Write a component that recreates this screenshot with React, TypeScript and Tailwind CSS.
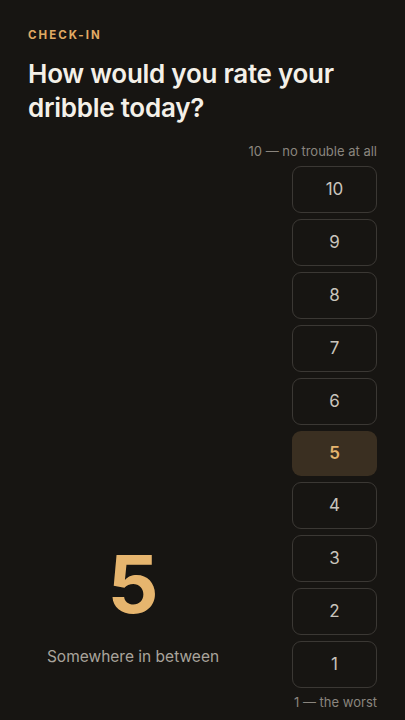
const scale = [10, 9, 8, 7, 6, 5, 4, 3, 2, 1];

export default function App() {
  const selected = 5;

  return (
    <div
      className="w-[405px] h-[720px] bg-[#171512] text-[#f4f0e8] overflow-hidden flex flex-col px-[28px]"
      style={{ fontFamily: "Inter, 'Noto Sans', sans-serif" }}
    >
      <div className="pt-[27px] text-[11.5px] font-bold tracking-[0.18em] text-[#e0aa63]">
        CHECK-IN
      </div>
      <h1 className="mt-[13px] text-[26px] leading-[34px] font-semibold tracking-[-0.01em]">
        How would you rate your
        <br />
        dribble today?
      </h1>

      <div className="flex flex-1 mt-[16px]">
        {/* current value */}
        <div className="w-[210px] flex flex-col items-center justify-end pb-[52px]">
          <div className="text-[80px] leading-none font-bold text-[#e6b56e]">
            {selected}
          </div>
          <div className="mt-[21px] text-[15.5px] text-[#a9a49c]">
            Somewhere in between
          </div>
        </div>

        <div className="flex-1 flex flex-col items-end">
          <div className="text-[13px] leading-[18px] text-[#8a857e] mt-[1px]">
            10 — no trouble at all
          </div>
          <div className="w-[85px] h-[522px] mt-[6px] flex flex-col gap-[6px]">
            {scale.map((n) => (
              <button
                key={n}
                className={
                  n === selected
                    ? "flex-1 rounded-[9px] bg-[#3a2f21] text-[#e6b56e] font-semibold text-[17px]"
                    : "flex-1 rounded-[9px] border border-[#3b3834] text-[#c9c4bc] text-[17px]"
                }
              >
                {n}
              </button>
            ))}
          </div>
          <div className="text-[13px] leading-[18px] text-[#8a857e] mt-[5px]">
            1 — the worst
          </div>
        </div>
      </div>
    </div>
  );
}
